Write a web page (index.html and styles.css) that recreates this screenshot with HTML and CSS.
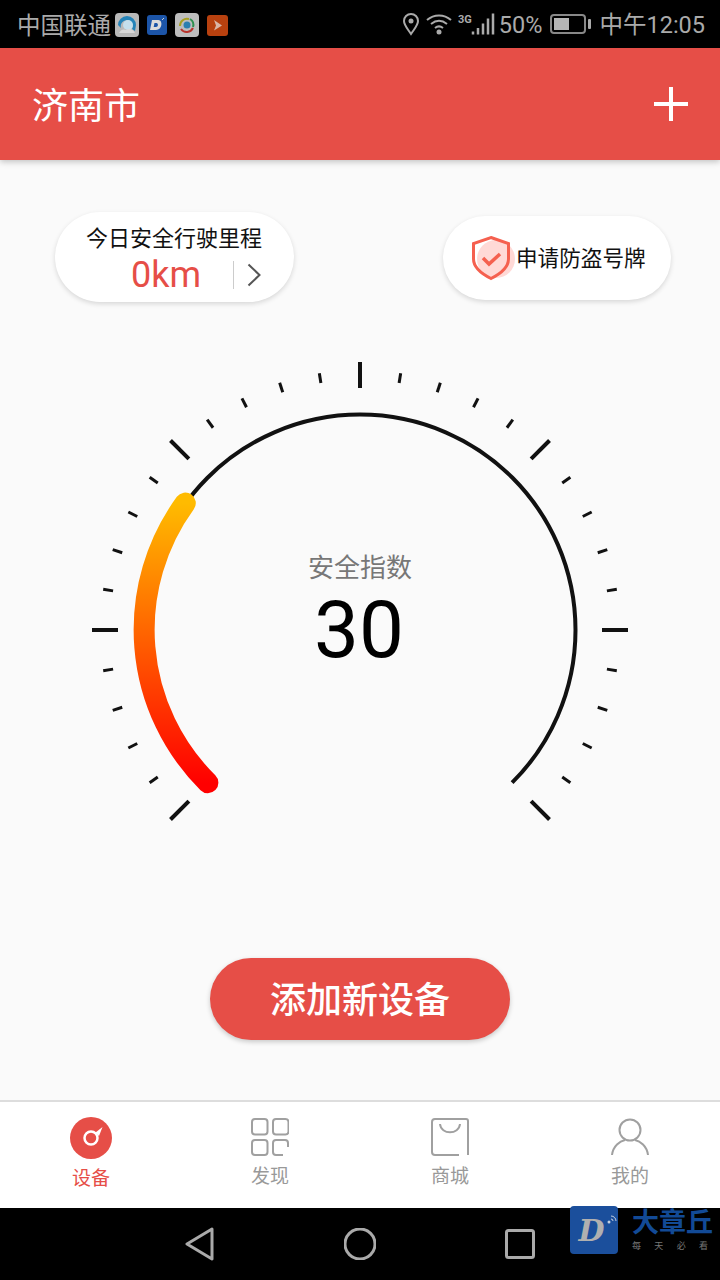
FILE: index.html
```html
<!DOCTYPE html>
<html lang="zh">
<head>
<meta charset="utf-8">
<title>济南市</title>
<link rel="stylesheet" href="styles.css">
</head>
<body>
<div class="screen">
  <div class="status">
    <span class="carrier">中国联通</span>
    <span class="app-icons">
      <svg class="app" width="24" height="24" viewBox="0 0 24 24"><rect width="24" height="24" rx="4" fill="#b9b9b9"/><path d="M3 12a9 9 0 0 1 18 0l-1 6-3-2a6 6 0 1 0-11-1z" fill="#2483b8"/><circle cx="13" cy="12" r="5" fill="#c4dfec"/><path d="M4 20c2-4 5-4 7-3 3-2 7-1 9 3z" fill="#d8d8d8"/></svg>
      <svg class="app app-d" width="20" height="20" viewBox="0 0 20 20"><rect width="20" height="20" rx="3" fill="#1c55a8"/><path d="M5 5h6.500c4.500 0 4 10-2.500 10H3zM7.500 8l-.8 4H9c2.500 0 2.500-4 .5-4z" fill="#dcdcdc" fill-rule="evenodd"/><path d="M15 5l2-2" stroke="#ccc" stroke-width="1"/></svg>
      <svg class="app" width="24" height="24" viewBox="0 0 24 24"><rect width="24" height="24" rx="4" fill="#bdbdbd"/><path d="M5 13a7 7 0 0 1 9-7" fill="none" stroke="#a8a020" stroke-width="2"/><path d="M15 6a7 7 0 0 1 3 8" fill="none" stroke="#2f8f4f" stroke-width="2"/><path d="M18 15a7 7 0 0 1-12 1" fill="none" stroke="#b8322a" stroke-width="2"/><circle cx="12" cy="12" r="3.500" fill="#2a7fb0"/></svg>
      <svg class="app app-o" width="21" height="21" viewBox="0 0 21 21"><rect width="21" height="21" rx="3" fill="#b8410f"/><path d="M7 5l8 5.500-8 5 2-5z" fill="#d9b6a6"/></svg>
    </span>
    <span class="status-right">
      <svg width="18" height="24" viewBox="0 0 18 24"><path d="M9 22C5 16 2 13 2 9a7 7 0 0 1 14 0c0 4-3 7-7 13z" fill="none" stroke="#aaa" stroke-width="2"/><circle cx="9" cy="9" r="2.500" fill="#aaa"/></svg>
      <svg class="wifi" width="26" height="24" viewBox="0 0 26 24"><path d="M1 8c7-6 17-6 24 0M5 12c5-4 11-4 16 0M9 16c2.500-2 5.500-2 8 0" fill="none" stroke="#aaa" stroke-width="2"/><circle cx="13" cy="20" r="2.500" fill="#aaa"/></svg>
      <span class="net">3G</span>
      <svg class="bars" width="24" height="24" viewBox="0 0 24 24"><path d="M2 22.500v-3M7 22.500v-6.500M12 22.500v-11M17 22.500v-16M22 22.500v-21" stroke="#aaa" stroke-width="2.500" fill="none"/></svg>
      <span class="pct">50%</span>
      <svg class="batt" width="41" height="20" viewBox="0 0 41 20"><rect x="1" y="1" width="34" height="18" rx="3" fill="none" stroke="#888" stroke-width="2"/><rect x="4" y="4" width="15" height="12" fill="#b5b5b5"/><rect x="38" y="5" width="3" height="10" rx="1" fill="#aaa"/></svg>
      <span class="clock">中午12:05</span>
    </span>
  </div>

  <header class="appbar">
    <h1 class="city">济南市</h1>
    <svg class="plus" width="34" height="34" viewBox="0 0 34 34"><path d="M17 0v34M0 17h34" stroke="#fff" stroke-width="4"/></svg>
  </header>

  <main class="content">
    <div class="cards">
      <div class="card card-mile">
        <div class="mile-title">今日安全行驶里程</div>
        <div class="mile-row">
          <span class="mile-value">0km</span>
          <span class="mile-sep"></span>
          <svg width="14" height="24" viewBox="0 0 14 24"><path d="M1.500 1.500L12.500 12 1.500 22.500" fill="none" stroke="#555" stroke-width="2"/></svg>
        </div>
      </div>
      <div class="card card-plate">
        <svg class="shield" width="46" height="46" viewBox="0 0 46 46"><circle cx="26" cy="24" r="19" fill="#ffd9d6"/><path d="M21 2.500l17.500 6V24c0 8.500-7.500 14.500-17.500 19.500C11 38.500 3.500 32.500 3.500 24V8.500z" fill="none" stroke="#f5604f" stroke-width="3"/><path d="M13 23l6 6 11-10" fill="none" stroke="#f5604f" stroke-width="3.500"/></svg>
        <span class="plate-text">申请防盗号牌</span>
      </div>
    </div>

    <div class="gauge">
      <svg class="gauge-svg" width="720" height="480" viewBox="0 350 720 480">
        <defs>
          <linearGradient id="heat" gradientUnits="userSpaceOnUse" x1="0" y1="783" x2="0" y2="503">
            <stop offset="0" stop-color="#ff0000"/>
            <stop offset="1" stop-color="#ffbb00"/>
          </linearGradient>
        </defs>
        <g class="major">
          <line x1="360" y1="362" x2="360" y2="388" transform="rotate(-135 360 630)"/>
          <line x1="360" y1="362" x2="360" y2="388" transform="rotate(-90 360 630)"/>
          <line x1="360" y1="362" x2="360" y2="388" transform="rotate(-45 360 630)"/>
          <line x1="360" y1="362" x2="360" y2="388"/>
          <line x1="360" y1="362" x2="360" y2="388" transform="rotate(45 360 630)"/>
          <line x1="360" y1="362" x2="360" y2="388" transform="rotate(90 360 630)"/>
          <line x1="360" y1="362" x2="360" y2="388" transform="rotate(135 360 630)"/>
        </g>
        <g class="minor">
          <line x1="360" y1="370" x2="360" y2="380" transform="rotate(-126 360 630)"/>
          <line x1="360" y1="370" x2="360" y2="380" transform="rotate(-117 360 630)"/>
          <line x1="360" y1="370" x2="360" y2="380" transform="rotate(-108 360 630)"/>
          <line x1="360" y1="370" x2="360" y2="380" transform="rotate(-99 360 630)"/>
          <line x1="360" y1="370" x2="360" y2="380" transform="rotate(-81 360 630)"/>
          <line x1="360" y1="370" x2="360" y2="380" transform="rotate(-72 360 630)"/>
          <line x1="360" y1="370" x2="360" y2="380" transform="rotate(-63 360 630)"/>
          <line x1="360" y1="370" x2="360" y2="380" transform="rotate(-54 360 630)"/>
          <line x1="360" y1="370" x2="360" y2="380" transform="rotate(-36 360 630)"/>
          <line x1="360" y1="370" x2="360" y2="380" transform="rotate(-27 360 630)"/>
          <line x1="360" y1="370" x2="360" y2="380" transform="rotate(-18 360 630)"/>
          <line x1="360" y1="370" x2="360" y2="380" transform="rotate(-9 360 630)"/>
          <line x1="360" y1="370" x2="360" y2="380" transform="rotate(9 360 630)"/>
          <line x1="360" y1="370" x2="360" y2="380" transform="rotate(18 360 630)"/>
          <line x1="360" y1="370" x2="360" y2="380" transform="rotate(27 360 630)"/>
          <line x1="360" y1="370" x2="360" y2="380" transform="rotate(36 360 630)"/>
          <line x1="360" y1="370" x2="360" y2="380" transform="rotate(54 360 630)"/>
          <line x1="360" y1="370" x2="360" y2="380" transform="rotate(63 360 630)"/>
          <line x1="360" y1="370" x2="360" y2="380" transform="rotate(72 360 630)"/>
          <line x1="360" y1="370" x2="360" y2="380" transform="rotate(81 360 630)"/>
          <line x1="360" y1="370" x2="360" y2="380" transform="rotate(99 360 630)"/>
          <line x1="360" y1="370" x2="360" y2="380" transform="rotate(108 360 630)"/>
          <line x1="360" y1="370" x2="360" y2="380" transform="rotate(117 360 630)"/>
          <line x1="360" y1="370" x2="360" y2="380" transform="rotate(126 360 630)"/>
        </g>
        <path class="track" d="M207.900 782.700A215.500 215.500 0 1 1 512.100 782.700"/>
        <path class="heat" d="M207.900 782.700A215.500 215.500 0 0 1 185.300 503"/>
      </svg>
      <div class="gauge-label">
        <div class="gauge-name">安全指数</div>
        <div class="gauge-value">30</div>
      </div>
    </div>

    <button class="add-btn"><span class="add-text">添加新设备</span></button>
  </main>

  <nav class="tabs">
    <div class="tab tab-on">
      <svg class="tab-ico" width="42" height="42" viewBox="0 0 42 42"><circle cx="21" cy="21" r="21" fill="#e64e47"/><circle cx="21" cy="21" r="6.500" fill="none" stroke="#fff" stroke-width="2.500"/><path d="M25.500 15.500l7-5.500-3.500 9z" fill="#fff"/></svg>
      <span class="tab-label">设备</span>
    </div>
    <div class="tab">
      <svg class="tab-ico" width="38" height="38" viewBox="0 0 38 38"><g fill="none" stroke="#a0a0a0" stroke-width="2"><rect x="1" y="1" width="15.500" height="15.500" rx="3"/><rect x="22" y="1" width="15.500" height="15.500" rx="3"/><rect x="1" y="22" width="15.500" height="15" rx="3"/><path d="M37 29v-4a3 3 0 0 0-3-3H25a3 3 0 0 0-3 3v9a3 3 0 0 0 3 3h7"/></g></svg>
      <span class="tab-label">发现</span>
    </div>
    <div class="tab">
      <svg class="tab-ico" width="38" height="38" viewBox="0 0 38 38"><g fill="none" stroke="#a0a0a0" stroke-width="2"><path d="M28 37H4a3 3 0 0 1-3-3V4a3 3 0 0 1 3-3h31a2 2 0 0 1 2 2v34"/><path d="M9 6c1 11 19 11 20 0"/></g></svg>
      <span class="tab-label">商城</span>
    </div>
    <div class="tab">
      <svg class="tab-ico" width="38" height="38" viewBox="0 0 38 38"><g fill="none" stroke="#a0a0a0" stroke-width="2"><circle cx="19" cy="12" r="10.500"/><path d="M1 37c1-9 8-14 13-15M37 37c-1-9-8-14-13-15"/></g></svg>
      <span class="tab-label">我的</span>
    </div>
  </nav>

  <div class="navbar">
    <svg width="32" height="34" viewBox="0 0 32 34"><path d="M28 2L3 17l25 15z" fill="none" stroke="#aaa" stroke-width="3" stroke-linejoin="round"/></svg>
    <svg width="32" height="32" viewBox="0 0 32 32"><circle cx="16" cy="16" r="15" fill="none" stroke="#aaa" stroke-width="3"/></svg>
    <svg width="32" height="32" viewBox="0 0 32 32"><rect x="2.500" y="2.500" width="27" height="27" rx="2" fill="none" stroke="#aaa" stroke-width="3"/></svg>
  </div>

  <div class="mark">
    <div class="mark-logo">
      <span class="mark-d">D</span>
      <svg class="mark-wave" width="11" height="11" viewBox="0 0 11 11"><g fill="none" stroke="#c5cfe0" stroke-width="1"><path d="M5 1a5 5 0 0 1 5 5M5 4a2 2 0 0 1 2 2"/></g><circle cx="3" cy="7" r="1.500" fill="#c5cfe0"/></svg>
    </div>
    <div class="mark-text">
      <div class="mark-name">大章丘</div>
      <div class="mark-sub"><span>每</span><span>天</span><span>必</span><span>看</span></div>
    </div>
  </div>
</div>
</body>
</html>
```

FILE: styles.css
```css
* { box-sizing: border-box; }
html, body { margin: 0; padding: 0; }
body {
  width: 720px;
  height: 1280px;
  overflow: hidden;
  font-family: "Noto Sans CJK SC", Roboto, sans-serif;
}
.screen {
  position: relative;
  width: 720px;
  height: 1280px;
  display: flex;
  flex-direction: column;
  background: #fafafa;
}
.status {
  height: 48px;
  flex: none;
  background: #000;
  color: #aaa;
  display: flex;
  align-items: center;
  padding: 0 15px 0 17px;
  font-size: 23.5px;
  font-family: Roboto, "Noto Sans CJK SC", sans-serif;
}
.carrier { width: 98px; line-height: 48px; margin-top: 4px; }
.app-icons { display: flex; align-items: center; gap: 8px; margin-top: 2px; }
.app { display: block; }
.status-right {
  margin-left: auto;
  display: flex;
  align-items: center;
}
.wifi { margin-left: 6px; }
.net { font-size: 11px; font-weight: 700; align-self: flex-start; margin: 5px 0 0 6px; line-height: 13px; }
.bars { margin-left: -1px; }
.pct { margin-left: 4px; margin-top: 2px; }
.batt { margin-left: 8px; }
.clock { margin-left: 8px; margin-top: -2px; }
.appbar {
  height: 112px;
  flex: none;
  background: #e64e47;
  display: flex;
  align-items: center;
  justify-content: space-between;
  padding: 0 32px;
  box-shadow: 0 2px 6px rgba(0, 0, 0, .22);
  position: relative;
}
.city {
  margin: -2px 0 0;
  font-size: 36px;
  font-weight: 400;
  color: #fff;
}
.content {
  flex: 1;
  display: flex;
  flex-direction: column;
  align-items: center;
  min-height: 0;
}
.cards {
  width: 100%;
  display: flex;
  align-items: flex-start;
  gap: 149px;
  padding: 52px 0 0 55px;
}
.card {
  background: #fff;
  border-radius: 46px;
  box-shadow: 0 2px 5px rgba(0, 0, 0, .14);
}
.card-mile {
  width: 239px;
  height: 90px;
  padding: 8px 0 0 31px;
}
.mile-title { font-size: 22px; line-height: 32px; color: #111; white-space: nowrap; }
.mile-row { display: flex; align-items: center; height: 36px; margin-top: 5px; }
.mile-value {
  font-family: Roboto, sans-serif;
  font-size: 36px;
  color: #e64e47;
  margin-left: 45px;
  line-height: 36px;
}
.mile-sep { width: 1px; height: 28px; background: #ccc; margin: 0 13px 0 32px; }
.card-plate {
  width: 228px;
  height: 84px;
  margin-top: 4px;
  display: flex;
  align-items: center;
  padding-left: 27px;
}
.shield { flex: none; }
.plate-text { font-size: 21.6px; color: #111; margin: -4px 0 0 0; white-space: nowrap; }
.gauge {
  position: relative;
  width: 720px;
  height: 480px;
  margin-top: 48px;
  flex: none;
}
.gauge-svg { display: block; }
.major line { stroke: #111; stroke-width: 4; }
.minor line { stroke: #111; stroke-width: 3; }
.track { fill: none; stroke: #111; stroke-width: 4; }
.heat { fill: none; stroke: url(#heat); stroke-width: 21; stroke-linecap: round; }
.gauge-label {
  position: absolute;
  left: 0;
  right: 0;
  top: 196px;
  text-align: center;
}
.gauge-name { font-size: 26px; line-height: 40px; color: #777; }
.gauge-value {
  font-family: Roboto, sans-serif;
  font-size: 80px;
  line-height: 90px;
  color: #000;
  margin: -1px 2px 0 0;
}
.add-btn {
  width: 300px;
  height: 82px;
  margin-top: 128px;
  flex: none;
  border: 0;
  border-radius: 41px;
  background: #e64e47;
  color: #fff;
  font-family: "Noto Sans CJK SC", sans-serif;
  font-size: 36px;
  font-weight: 500;
  box-shadow: 0 2px 5px rgba(0, 0, 0, .2);
}
.add-text { display: block; margin-top: -4px; }
.tabs {
  height: 108px;
  flex: none;
  background: #fff;
  border-top: 2px solid #ddd;
  display: grid;
  grid-template-columns: repeat(4, 1fr);
}
.tab {
  display: flex;
  flex-direction: column;
  align-items: center;
  padding-top: 16px;
  color: #999;
}
.tab-ico { display: block; flex: none; }
.tab-label { font-size: 19px; line-height: 26px; margin-top: 6px; }
.tab-on { padding: 15px 0 0 2px; color: #e64e47; }
.tab-on .tab-label { margin-top: 5px; }
.navbar {
  height: 72px;
  flex: none;
  background: #000;
  display: flex;
  align-items: center;
  justify-content: center;
  gap: 128px;
}
.mark {
  position: absolute;
  left: 570px;
  top: 1206px;
  display: flex;
  gap: 14px;
}
.mark-logo {
  position: relative;
  width: 48px;
  height: 48px;
  border-radius: 4px;
  background: #1b4f9c;
  display: flex;
  align-items: center;
  justify-content: center;
}
.mark-d {
  font-family: "DejaVu Serif", "DejaVu Sans", sans-serif;
  font-style: italic;
  font-weight: 700;
  font-size: 30px;
  line-height: 48px;
  color: #b0b0b0;
  margin: 2px 5px 0 0;
}
.mark-wave { position: absolute; right: 1px; top: 9px; }
.mark-name {
  font-size: 27px;
  font-weight: 700;
  line-height: 30px;
  color: #124a96;
  white-space: nowrap;
}
.mark-sub {
  display: flex;
  justify-content: space-between;
  width: 76px;
  margin-top: 3px;
  font-size: 9px;
  line-height: 14px;
  color: #777;
}
```
